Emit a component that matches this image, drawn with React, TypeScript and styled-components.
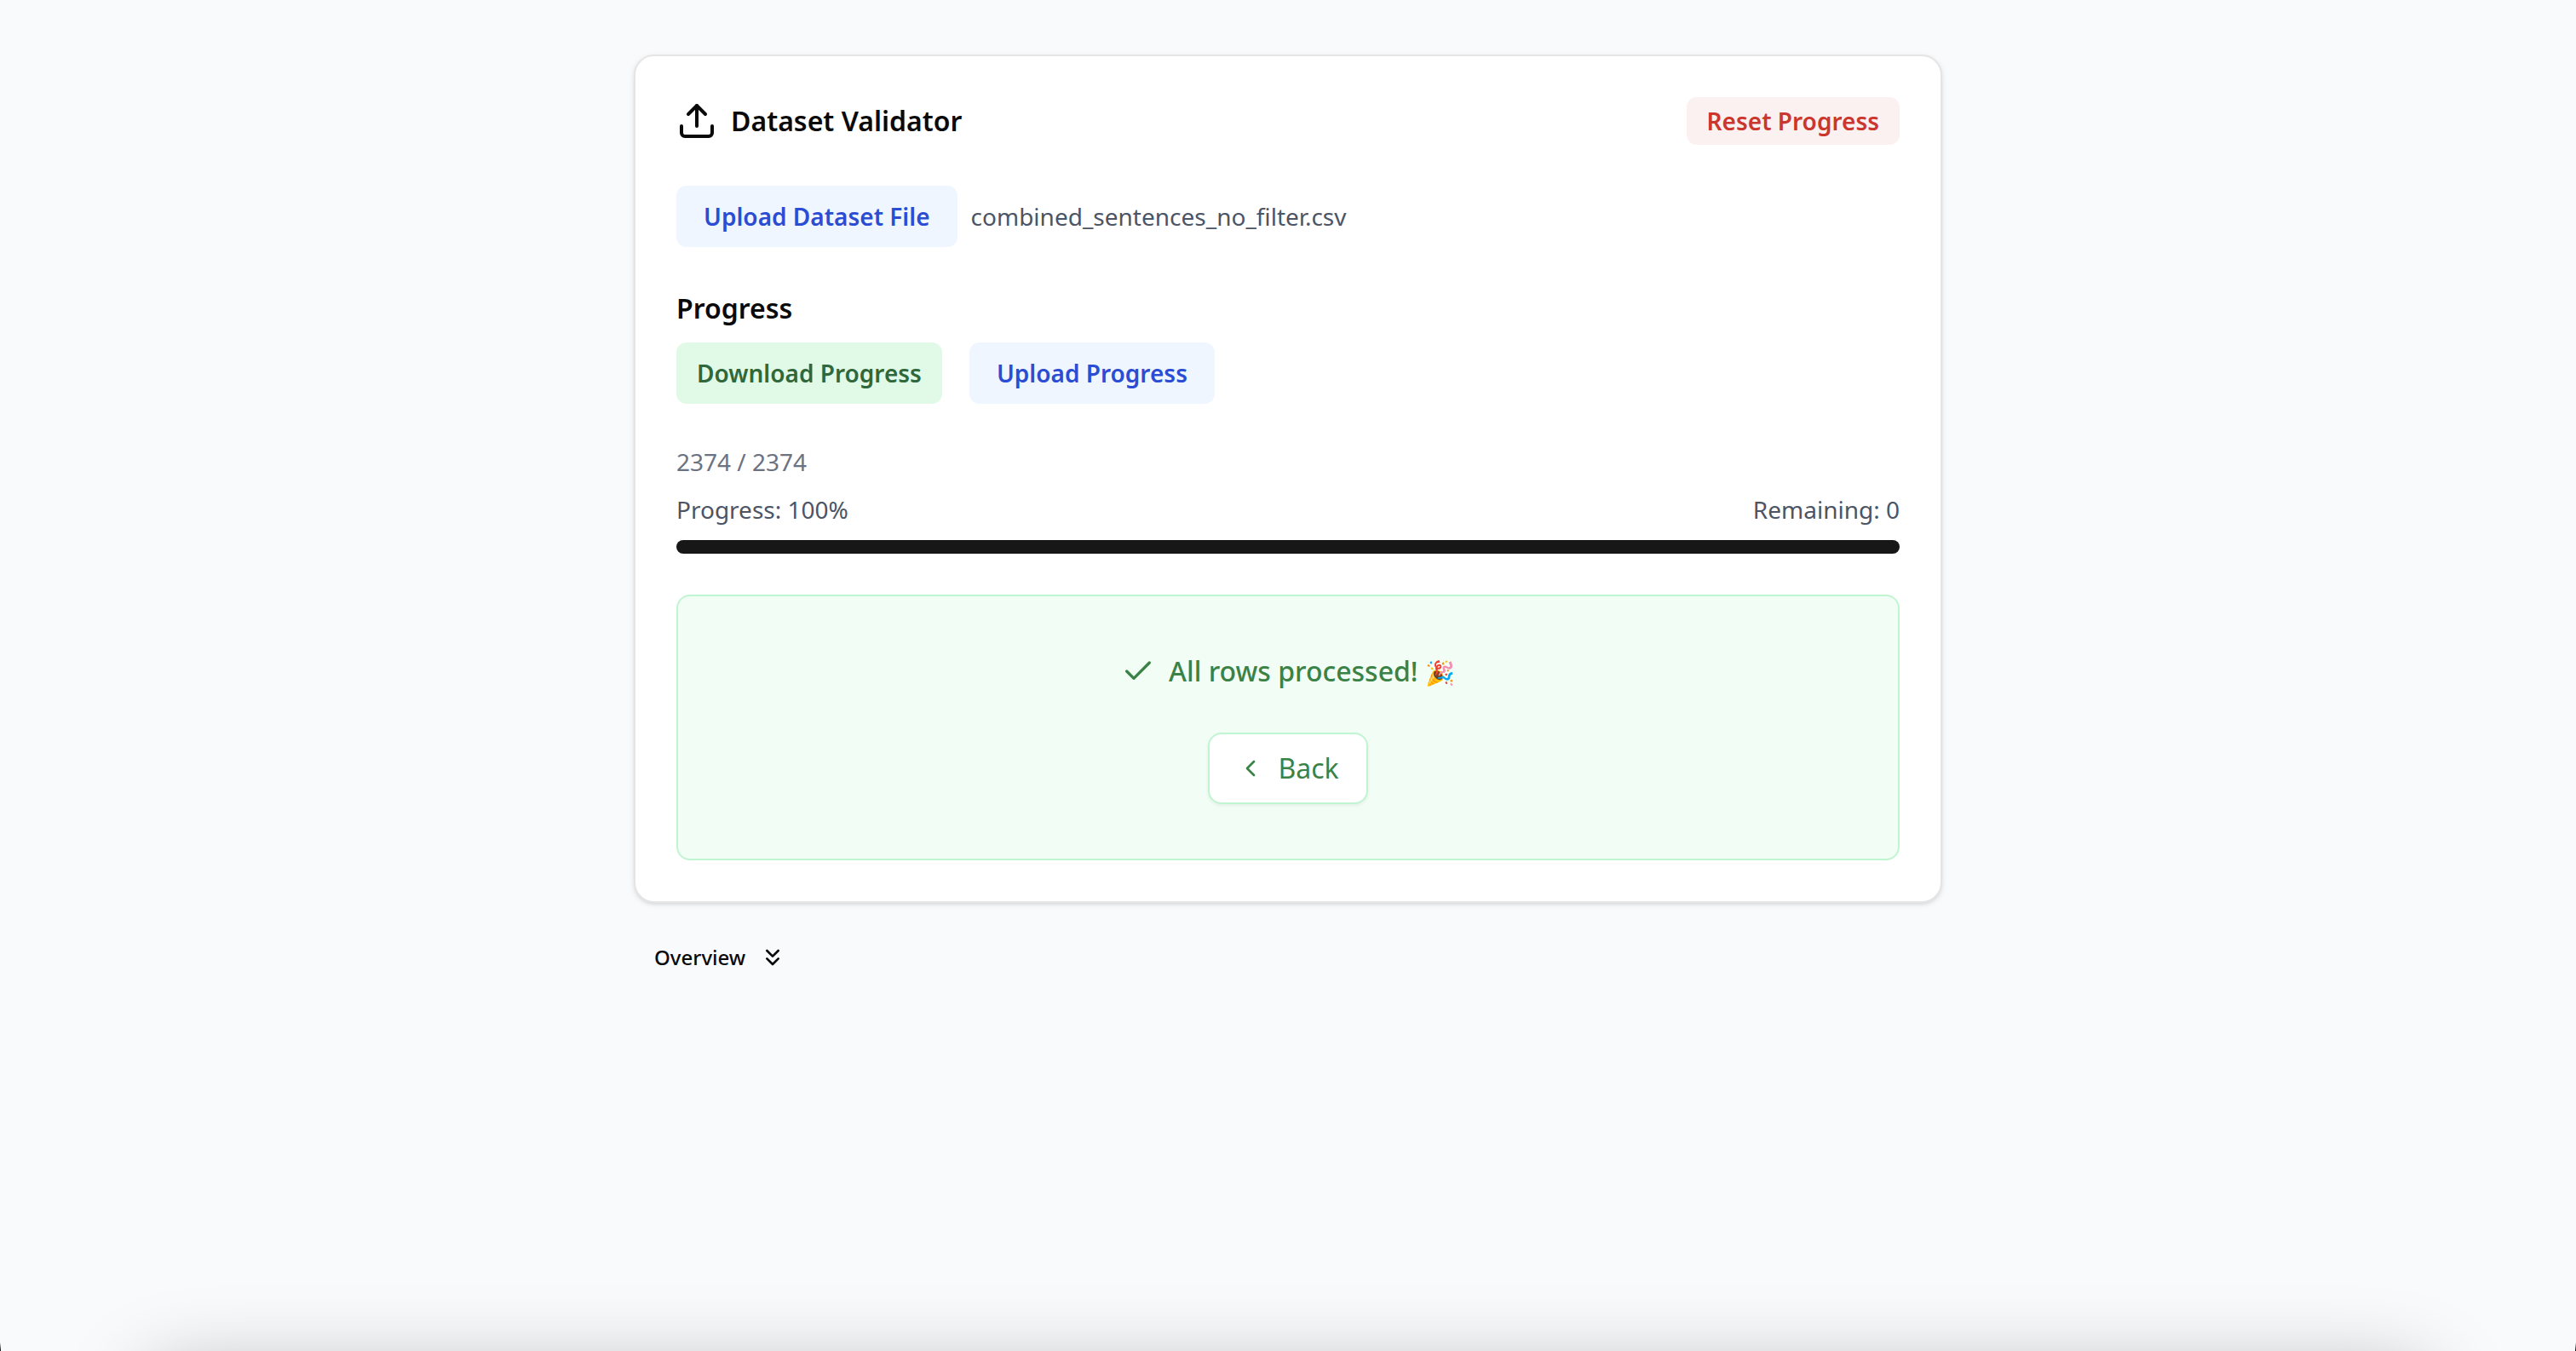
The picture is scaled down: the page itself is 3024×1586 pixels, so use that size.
import React, { useState } from "react";
import styled, { createGlobalStyle, css } from "styled-components";
import { Check, ChevronLeft, ChevronsDown, Upload } from "lucide-react";

const GlobalStyle = createGlobalStyle`
  *, *::before, *::after { box-sizing: border-box; }
  body {
    margin: 0;
    background: #f9fafc;
    color: #0a0a0a;
    font-family: "Noto Sans", sans-serif;
    font-size: 28px;
    line-height: 40px;
  }
  button { font: inherit; border: 0; cursor: pointer; }
  svg { flex: none; display: block; }
`;

const Page = styled.main`
  display: flex;
  flex-direction: column;
  gap: 32px;
  width: 100%;
  max-width: 1600px;
  min-height: 100vh;
  margin: 0 auto;
  padding: 64px 32px;
`;

const Card = styled.section`
  display: flex;
  flex-direction: column;
  gap: 48px;
  padding: 48px;
  background: #fff;
  border: 2px solid #e5e5e5;
  border-radius: 24px;
  box-shadow: 0 2px 6px rgba(0, 0, 0, 0.1), 0 2px 4px -2px rgba(0, 0, 0, 0.1);
`;

const CardHeader = styled.header`
  display: flex;
  align-items: center;
  justify-content: space-between;
`;

const Title = styled.h1`
  display: flex;
  align-items: center;
  gap: 16px;
  margin: 0;
  font-size: 32px;
  line-height: 48px;
  font-weight: 600;
`;

const SectionTitle = styled.h2`
  margin: 0;
  font-size: 32px;
  line-height: 48px;
  font-weight: 600;
`;

const tones = {
  red: css`background: #fcf1f1; color: #cb372d; padding: 8px 24px;`,
  blue: css`background: #eff6ff; color: #2b4dd4; padding: 16px 32px;`,
  green: css`background: #e1fae8; color: #30683b; padding: 16px 24px;`,
};

const SoftButton = styled.button<{ $tone: keyof typeof tones }>`
  border-radius: 12px;
  font-weight: 600;
  white-space: nowrap;
  ${({ $tone }) => tones[$tone]}
`;

const Row = styled.div<{ $gap: number }>`
  display: flex;
  align-items: center;
  gap: ${({ $gap }) => $gap}px;
`;

const FileName = styled.span`
  color: #4b5565;
`;

const Stack = styled.div`
  display: flex;
  flex-direction: column;
  gap: 16px;
`;

const Counter = styled.div`
  color: #6b7282;
`;

const Stats = styled.div`
  display: flex;
  justify-content: space-between;
  color: #4b5565;
`;

const Track = styled.div`
  height: 16px;
  overflow: hidden;
  border-radius: 8px;
  background: #e5e5e5;
`;

const Fill = styled.div`
  height: 100%;
  background: #171717;
`;

const DonePanel = styled.section`
  display: flex;
  flex-direction: column;
  align-items: center;
  gap: 48px;
  padding: 64px;
  color: #3b8247;
  background: #f2fdf5;
  border: 2px solid #c0f5d1;
  border-radius: 16px;
  font-size: 32px;
  line-height: 48px;
`;

const DoneMessage = styled.div`
  display: flex;
  align-items: center;
  gap: 16px;
  height: 48px;
  font-weight: 500;
`;

const Emoji = styled.span`
  font-size: 28px;
`;

const BackButton = styled.button`
  display: flex;
  align-items: center;
  gap: 16px;
  padding: 16px 32px;
  color: inherit;
  background: #fff;
  && { border: 2px solid #c0f5d1; }
  border-radius: 16px;
  box-shadow: 0 2px 4px rgba(0, 0, 0, 0.06);
`;

const OverviewToggle = styled.button`
  display: flex;
  align-items: center;
  align-self: flex-start;
  gap: 16px;
  height: 64px;
  padding: 0 24px;
  background: transparent;
  color: inherit;
  && { font-size: 24px; }
  font-weight: 500;
`;

const BottomGlow = styled.div`
  position: fixed;
  top: 100%;
  left: 168px;
  right: 168px;
  height: 100px;
  border-radius: 40px;
  box-shadow: 0 24px 96px rgba(0, 0, 0, 0.28);
  pointer-events: none;
`;

const WindowEdge = styled.div<{ $side: "left" | "right" }>`
  position: fixed;
  bottom: 0;
  ${({ $side }) => $side}: 0;
  width: 1px;
  height: 10px;
  background: linear-gradient(transparent, #000);
`;

export default function App() {
  const [open, setOpen] = useState(false);
  const total = 2374;
  const done = 2374;
  const percent = Math.round((done / total) * 100);

  return (
    <>
      <GlobalStyle />
      <Page>
        <Card>
          <CardHeader>
            <Title>
              <Upload size={48} />
              Dataset Validator
            </Title>
            <SoftButton $tone="red">Reset Progress</SoftButton>
          </CardHeader>
          <Row $gap={16}>
            <SoftButton $tone="blue">Upload Dataset File</SoftButton>
            <FileName>combined_sentences_no_filter.csv</FileName>
          </Row>
          <Stack>
            <SectionTitle>Progress</SectionTitle>
            <Row $gap={32}>
              <SoftButton $tone="green">Download Progress</SoftButton>
              <SoftButton $tone="blue">Upload Progress</SoftButton>
            </Row>
          </Stack>
          <Stack>
            <Counter>{`${done} / ${total}`}</Counter>
            <Stats>
              <span>{`Progress: ${percent}%`}</span>
              <span>{`Remaining: ${total - done}`}</span>
            </Stats>
            <Track role="progressbar" aria-label="Progress" aria-valuenow={percent}>
              <Fill style={{ width: `${percent}%` }} />
            </Track>
          </Stack>
          <DonePanel>
            <DoneMessage>
              <Check size={40} />
              <span>
                All rows processed! <Emoji>🎉</Emoji>
              </span>
            </DoneMessage>
            <BackButton>
              <ChevronLeft size={32} />
              Back
            </BackButton>
          </DonePanel>
        </Card>
        <OverviewToggle aria-expanded={open} onClick={() => setOpen(!open)}>
          Overview
          <ChevronsDown size={32} />
        </OverviewToggle>
      </Page>
      <BottomGlow />
      <WindowEdge $side="left" />
      <WindowEdge $side="right" />
    </>
  );
}
